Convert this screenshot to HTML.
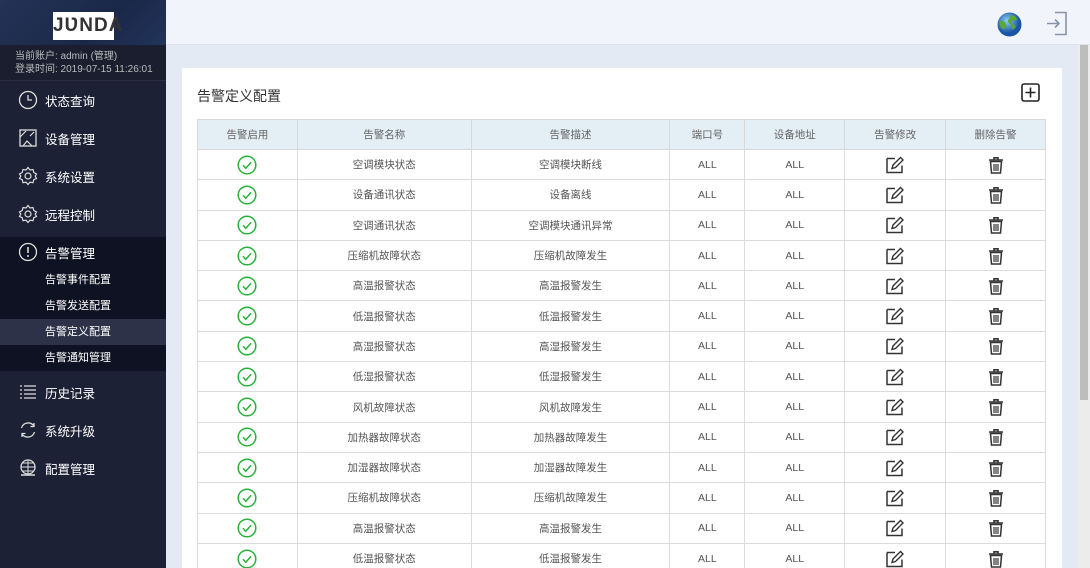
<!DOCTYPE html>
<html><head><meta charset="utf-8"><style>
*{margin:0;padding:0;box-sizing:border-box}
html,body{width:1090px;height:568px;overflow:hidden}
body{font-family:"Liberation Sans","Noto Sans CJK SC",sans-serif;background:#e4eaf3;position:relative}
#side{position:absolute;left:0;top:0;width:166px;height:568px;background:#1d2135;color:#fff}
#logoarea{height:45px;background:linear-gradient(135deg,#243456,#1a2748 60%,#22345a);position:relative}
#logo{position:absolute;left:53px;top:12px;width:61px;height:28px;background:#fff;font:bold 19px "Liberation Sans",sans-serif;color:#333;text-align:center;line-height:28px;letter-spacing:1px}
#info{height:36px;background:#1a1e2e;font-size:10px;color:#bbb;padding:5px 0 0 15px;line-height:13px;border-bottom:1px solid #2a2e40}
.mi{height:38px;display:flex;align-items:center;font-size:12.5px;color:#fff}
.mi svg{margin-left:18px;margin-right:7px;width:20px;height:20px}
#sub{background:#0f1222;margin-top:4px;margin-bottom:2px}
#sub .mi{height:30px}
.si{height:26px;line-height:26px;padding-left:45px;font-size:11px;color:#fff}
.si.act{background:#2e3248}
#top{position:absolute;left:166px;top:0;right:0;height:45px;background:#f1f5fb;border-bottom:1px solid #dde4ee}
#card{position:absolute;left:182px;top:68px;width:880px;height:500px;background:#fff;overflow:hidden}
#title{position:absolute;left:15px;top:18px;font-size:14px;color:#333}
#add{position:absolute;left:839px;top:15px}
table{position:absolute;left:15px;top:51px;border-collapse:collapse;width:849px;font-size:10.5px;color:#555;text-align:center}
th{background:#e3eef5;font-weight:normal;height:30px;border:1px solid #d8d8d8;color:#666}
td{height:30.3px;border:1px solid #dcdcdc;padding:0}
td svg{display:block;margin:0 auto}
#sb{position:absolute;right:0;top:45px;width:12px;height:523px;background:#ececec}
#sbt{position:absolute;right:2px;top:45px;width:8px;height:355px;background:#bdbdbd}
</style></head><body>
<svg width="0" height="0" style="position:absolute">
<symbol id="ok" viewBox="0 0 20 20"><circle cx="10" cy="10" r="8.8" fill="none" stroke="#27b33a" stroke-width="1.5"/><path d="M6 10.3l2.8 3 5.3-6" fill="none" stroke="#27b33a" stroke-width="1.5"/></symbol>
<symbol id="ed" viewBox="0 0 20 20"><path d="M2 3.5h8M2 3.5v14h15v-7" fill="none" stroke="#333" stroke-width="1.5"/><path d="M7 13.5l1-3.5 7.5-7.5 2.5 2.5-7.5 7.5z" fill="none" stroke="#333" stroke-width="1.4"/></symbol>
<symbol id="tr" viewBox="0 0 20 20"><path d="M3 5h14M8 5V2.8h4V5" fill="none" stroke="#333" stroke-width="1.6"/><path d="M4.5 6.5l1 11.5h9l1-11.5z" fill="none" stroke="#333" stroke-width="1.5"/><path d="M8 9v7M10 9v7M12 9v7" stroke="#333" stroke-width="1.2"/></symbol>
</svg>
<div id="side">
<div id="logoarea"><div id="logo">JƲNDA</div></div>
<div id="info">当前账户: admin (管理)<br>登录时间: 2019-07-15 11:26:01</div>
<div class="mi"><svg viewBox="0 0 20 20"><circle cx="10" cy="10" r="8.5" fill="none" stroke="#ddd" stroke-width="1.3"/><path d="M10 5v5h4" fill="none" stroke="#ddd" stroke-width="1.3"/></svg>状态查询</div>
<div class="mi"><svg viewBox="0 0 20 20"><rect x="2" y="2" width="16" height="16" fill="none" stroke="#ddd" stroke-width="1.3"/><path d="M2 9l6-6M5 18l4-5 5 5M12 8l4-4" fill="none" stroke="#ddd" stroke-width="1.2"/></svg>设备管理</div>
<div class="mi"><svg viewBox="0 0 20 20"><path d="M10 1.5l2 2.5 3-.5.8 3 2.7 1.5-1.3 2 1.3 2.5-2.7 1.2-.8 3-3-.5-2 2.3-2-2.3-3 .5-.8-3-2.7-1.2 1.3-2.5-1.3-2 2.7-1.5.8-3 3 .5z" fill="none" stroke="#ddd" stroke-width="1.2"/><circle cx="10" cy="10" r="3" fill="none" stroke="#ddd" stroke-width="1.2"/></svg>系统设置</div>
<div class="mi"><svg viewBox="0 0 20 20"><path d="M10 1.5l2 2.5 3-.5.8 3 2.7 1.5-1.3 2 1.3 2.5-2.7 1.2-.8 3-3-.5-2 2.3-2-2.3-3 .5-.8-3-2.7-1.2 1.3-2.5-1.3-2 2.7-1.5.8-3 3 .5z" fill="none" stroke="#ddd" stroke-width="1.2"/><circle cx="10" cy="10" r="3" fill="none" stroke="#ddd" stroke-width="1.2"/></svg>远程控制</div>
<div id="sub">
<div class="mi"><svg viewBox="0 0 20 20"><circle cx="10" cy="10" r="8.5" fill="none" stroke="#ddd" stroke-width="1.3"/><path d="M10 5v6" stroke="#ddd" stroke-width="1.6"/><circle cx="10" cy="14" r="1" fill="#ddd"/></svg>告警管理</div>
<div class="si">告警事件配置</div><div class="si">告警发送配置</div><div class="si act">告警定义配置</div><div class="si">告警通知管理</div>
</div>
<div class="mi"><svg viewBox="0 0 20 20"><path d="M2 4h2M2 8h2M2 12h2M2 16h2M6 4h12M6 8h12M6 12h12M6 16h12" stroke="#ddd" stroke-width="1.3"/></svg>历史记录</div>
<div class="mi"><svg viewBox="0 0 20 20"><path d="M16 6A7 7 0 0 0 3.5 8M4 14a7 7 0 0 0 12.5-2M16 3v3.5h-3.5M4 17v-3.5h3.5" fill="none" stroke="#ddd" stroke-width="1.3"/></svg>系统升级</div>
<div class="mi"><svg viewBox="0 0 20 20"><circle cx="10" cy="9" r="7" fill="none" stroke="#ddd" stroke-width="1.3"/><path d="M3 9h14M10 2v14M5 5h10M5 13h10" stroke="#ddd" stroke-width="1"/><path d="M3 17h14" stroke="#ddd" stroke-width="1.5"/></svg>配置管理</div>
</div>
<div id="top">
<svg style="position:absolute;left:831px;top:12px" width="25" height="25" viewBox="0 0 25 25"><defs><radialGradient id="g" cx="40%" cy="35%"><stop offset="0" stop-color="#8fd0f5"/><stop offset="1" stop-color="#1b55a5"/></radialGradient></defs><circle cx="12.5" cy="12.5" r="12" fill="url(#g)"/><path d="M3 9c3-1 5 1 6 3s-1 5-3 5S2 13 3 9zM14 3c3 0 6 2 6 5-2 1-4-1-5 1s2 4 4 5c-1 3-3 4-4 3s0-4-2-5-3-3-1-5 1-4 2-4z" fill="#5aa83a"/></svg>
<svg style="position:absolute;left:880px;top:11px" width="22" height="25" viewBox="0 0 22 25"><path d="M9 1.5h11v22H9" fill="none" stroke="#8a93a6" stroke-width="1.6"/><path d="M1 12.5h12M9 8.5l4 4-4 4" fill="none" stroke="#8a93a6" stroke-width="1.6"/></svg>
</div>
<div id="card">
<div id="title">告警定义配置</div>
<svg id="add" width="19" height="19" viewBox="0 0 19 19"><rect x="1" y="1" width="17" height="17" rx="2" fill="none" stroke="#222" stroke-width="1.6"/><path d="M9.5 4.5v10M4.5 9.5h10" stroke="#222" stroke-width="1.6"/></svg>
<table>
<colgroup><col style="width:100px"><col style="width:174px"><col style="width:199px"><col style="width:75px"><col style="width:100px"><col style="width:101px"><col style="width:100px"></colgroup>
<tr><th>告警启用</th><th>告警名称</th><th>告警描述</th><th>端口号</th><th>设备地址</th><th>告警修改</th><th>删除告警</th></tr>
<tr><td><svg width="20" height="20"><use href="#ok"/></svg></td><td>空调模块状态</td><td>空调模块断线</td><td>ALL</td><td>ALL</td><td><svg width="20" height="20"><use href="#ed"/></svg></td><td><svg width="20" height="20"><use href="#tr"/></svg></td></tr>
<tr><td><svg width="20" height="20"><use href="#ok"/></svg></td><td>设备通讯状态</td><td>设备离线</td><td>ALL</td><td>ALL</td><td><svg width="20" height="20"><use href="#ed"/></svg></td><td><svg width="20" height="20"><use href="#tr"/></svg></td></tr>
<tr><td><svg width="20" height="20"><use href="#ok"/></svg></td><td>空调通讯状态</td><td>空调模块通讯异常</td><td>ALL</td><td>ALL</td><td><svg width="20" height="20"><use href="#ed"/></svg></td><td><svg width="20" height="20"><use href="#tr"/></svg></td></tr>
<tr><td><svg width="20" height="20"><use href="#ok"/></svg></td><td>压缩机故障状态</td><td>压缩机故障发生</td><td>ALL</td><td>ALL</td><td><svg width="20" height="20"><use href="#ed"/></svg></td><td><svg width="20" height="20"><use href="#tr"/></svg></td></tr>
<tr><td><svg width="20" height="20"><use href="#ok"/></svg></td><td>高温报警状态</td><td>高温报警发生</td><td>ALL</td><td>ALL</td><td><svg width="20" height="20"><use href="#ed"/></svg></td><td><svg width="20" height="20"><use href="#tr"/></svg></td></tr>
<tr><td><svg width="20" height="20"><use href="#ok"/></svg></td><td>低温报警状态</td><td>低温报警发生</td><td>ALL</td><td>ALL</td><td><svg width="20" height="20"><use href="#ed"/></svg></td><td><svg width="20" height="20"><use href="#tr"/></svg></td></tr>
<tr><td><svg width="20" height="20"><use href="#ok"/></svg></td><td>高湿报警状态</td><td>高湿报警发生</td><td>ALL</td><td>ALL</td><td><svg width="20" height="20"><use href="#ed"/></svg></td><td><svg width="20" height="20"><use href="#tr"/></svg></td></tr>
<tr><td><svg width="20" height="20"><use href="#ok"/></svg></td><td>低湿报警状态</td><td>低湿报警发生</td><td>ALL</td><td>ALL</td><td><svg width="20" height="20"><use href="#ed"/></svg></td><td><svg width="20" height="20"><use href="#tr"/></svg></td></tr>
<tr><td><svg width="20" height="20"><use href="#ok"/></svg></td><td>风机故障状态</td><td>风机故障发生</td><td>ALL</td><td>ALL</td><td><svg width="20" height="20"><use href="#ed"/></svg></td><td><svg width="20" height="20"><use href="#tr"/></svg></td></tr>
<tr><td><svg width="20" height="20"><use href="#ok"/></svg></td><td>加热器故障状态</td><td>加热器故障发生</td><td>ALL</td><td>ALL</td><td><svg width="20" height="20"><use href="#ed"/></svg></td><td><svg width="20" height="20"><use href="#tr"/></svg></td></tr>
<tr><td><svg width="20" height="20"><use href="#ok"/></svg></td><td>加湿器故障状态</td><td>加湿器故障发生</td><td>ALL</td><td>ALL</td><td><svg width="20" height="20"><use href="#ed"/></svg></td><td><svg width="20" height="20"><use href="#tr"/></svg></td></tr>
<tr><td><svg width="20" height="20"><use href="#ok"/></svg></td><td>压缩机故障状态</td><td>压缩机故障发生</td><td>ALL</td><td>ALL</td><td><svg width="20" height="20"><use href="#ed"/></svg></td><td><svg width="20" height="20"><use href="#tr"/></svg></td></tr>
<tr><td><svg width="20" height="20"><use href="#ok"/></svg></td><td>高温报警状态</td><td>高温报警发生</td><td>ALL</td><td>ALL</td><td><svg width="20" height="20"><use href="#ed"/></svg></td><td><svg width="20" height="20"><use href="#tr"/></svg></td></tr>
<tr><td><svg width="20" height="20"><use href="#ok"/></svg></td><td>低温报警状态</td><td>低温报警发生</td><td>ALL</td><td>ALL</td><td><svg width="20" height="20"><use href="#ed"/></svg></td><td><svg width="20" height="20"><use href="#tr"/></svg></td></tr>
</table>
</div>
<div id="sb"></div><div id="sbt"></div>
</body></html>
